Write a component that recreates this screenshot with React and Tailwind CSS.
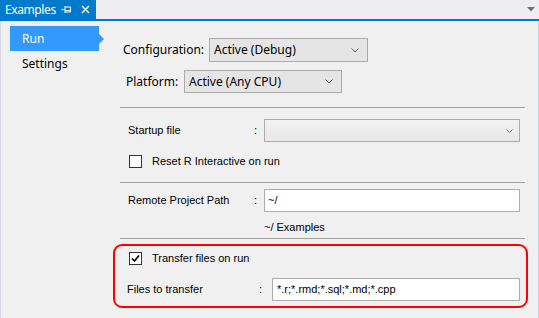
import React from 'react';

// Combo box used on the Run page
function Combo({ value, width, height, disabled }) {
    return (
        <div
            className={`flex items-center justify-between border border-[#acacac] pl-[4px] pr-[8px] ${disabled ? 'bg-[#ebebeb]' : 'bg-[#e5e5e5]'} ${width} ${height}`}
        >
            <span className="text-[12px] text-black" style={{ fontFamily: '"Noto Sans", sans-serif' }}>{value}</span>
            <svg width="8" height="5" viewBox="0 0 8 5" className={disabled ? 'text-[#707070]' : 'text-[#606060]'}>
                <path d="M0.5 0.5 L4 4 L7.5 0.5" fill="none" stroke="currentColor" strokeWidth="1" />
            </svg>
        </div>
    );
}

function CheckBox({ checked }) {
    return (
        <div className="w-[13px] h-[13px] border border-[#333333] bg-white flex items-center justify-center">
            {checked && (
                <svg width="11" height="11" viewBox="0 0 11 11">
                    <path d="M2 5.5 L4.5 8 L9 2.5" fill="none" stroke="#000" strokeWidth="1.7" />
                </svg>
            )}
        </div>
    );
}

export default function App() {
    const seg = { fontFamily: '"Noto Sans", "Open Sans", sans-serif' };
    const win = { fontFamily: '"Liberation Sans", Arial, sans-serif' };

    return (
        <div className="w-[539px] h-[318px] flex flex-col bg-[#f0f0f0] overflow-hidden">
            {/* tool window header */}
            <div className="h-[19px] flex bg-[#eeeef2]">
                <div className="w-[96px] h-full bg-[#007acc] flex items-center pl-[5px] text-white text-[12px]" style={seg}>
                    <span className="leading-none tracking-[-0.4px]">Examples</span>
                    <svg width="11" height="9" viewBox="0 0 11 9" className="ml-[5px]">
                        <path d="M0.5 4.5 H4 M4 1 V8 M4 2 H9.5 V7 H4 M4 5.5 H9.5" fill="none" stroke="white" strokeWidth="1" />
                    </svg>
                    <svg width="9" height="9" viewBox="0 0 9 9" className="ml-[9px]">
                        <path d="M1 1 L8 8 M8 1 L1 8" stroke="white" strokeWidth="1.4" />
                    </svg>
                </div>
                <div className="flex-1 flex justify-end items-center pr-[4px]">
                    <svg width="8" height="5" viewBox="0 0 8 5">
                        <path d="M0 0 H8 L4 4.5 Z" fill="#717171" />
                    </svg>
                </div>
            </div>
            <div className="h-[2px] bg-[#007acc]" />

            <div className="flex-1 flex border-l border-r border-l-[#d5d7e2] border-r-[#ccceDB]">
                {/* left navigation */}
                <div className="w-[112px] pt-[5px] pl-[9px] text-[12px]" style={seg}>
                    <div className="relative w-[89px] h-[25px] bg-[#3399ff] text-white flex items-center pl-[12px]">
                        Run
                        <div className="absolute right-[-5px] top-[8px] w-0 h-0 border-y-[5px] border-y-transparent border-l-[5px] border-l-[#3399ff]" />
                    </div>
                    <div className="h-[25px] flex items-center pl-[12px] text-black">Settings</div>
                </div>

                {/* main page */}
                <div className="flex-1 flex flex-col pr-[10px]">
                    <div className="flex items-center mt-[17px] pl-[10px] text-[12px] text-black" style={seg}>
                        <span className="w-[86px]">Configuration:</span>
                        <Combo value="Active (Debug)" width="w-[159px]" height="h-[24px]" />
                    </div>
                    <div className="flex items-center mt-[8px] pl-[13px] text-[12px] text-black" style={seg}>
                        <span className="w-[58px]">Platform:</span>
                        <Combo value="Active (Any CPU)" width="w-[158px]" height="h-[23px]" />
                    </div>

                    <div className="mt-[14px] ml-[7px] mr-[3px] border-t border-[#a0a0a0]" />

                    <div className="flex items-center mt-[11px] pl-[15px] text-[11px] text-black" style={win}>
                        <span className="w-[126px]">Startup file</span>
                        <span className="w-[10px]">:</span>
                        <div className="w-[256px] h-[23px] border border-[#acacac] bg-gradient-to-b from-[#f2f2f2] to-[#e7e7e7] flex items-center justify-end pr-[6px]">
                            <svg width="7" height="4" viewBox="0 0 7 4">
                                <path d="M0.5 0.5 L3.5 3.5 L6.5 0.5" fill="none" stroke="#707070" strokeWidth="1" />
                            </svg>
                        </div>
                    </div>
                    <div className="flex items-center mt-[11px] pl-[16px] text-[11px] text-black" style={win}>
                        <CheckBox />
                        <span className="ml-[10px]">Reset R Interactive on run</span>
                    </div>

                    <div className="mt-[12px] ml-[7px] mr-[3px] border-t border-[#a0a0a0]" />

                    <div className="flex items-center mt-[6px] pl-[15px] text-[11px] text-black" style={win}>
                        <span className="w-[126px]">Remote Project Path</span>
                        <span className="w-[10px]">:</span>
                        <div className="w-[256px] h-[23px] border border-[#acacac] bg-white flex items-center pl-[3px]">~/</div>
                    </div>
                    <div className="mt-[7px] pl-[151px] text-[11px] text-black" style={win}>~/ Examples</div>

                    <div className="mt-[3px] ml-[7px] mr-[3px] border-t border-[#a0a0a0]" />

                    {/* highlighted transfer options */}
                    <div className="mt-[5px] h-[64px] border-2 border-[#ff0000] rounded-[9px] pt-[4px] text-[11px] text-black" style={win}>
                        <div className="flex items-center pl-[14px]">
                            <CheckBox checked />
                            <span className="ml-[10px]">Transfer files on run</span>
                        </div>
                        <div className="flex items-center mt-[11px] pl-[12px]">
                            <span className="w-[132px]">Files to transfer</span>
                            <span className="w-[13px]">:</span>
                            <div className="w-[248px] h-[23px] border border-[#acacac] bg-white flex items-center pl-[4px]">*.r;*.rmd;*.sql;*.md;*.cpp</div>
                        </div>
                    </div>
                </div>
            </div>
        </div>
    );
}
